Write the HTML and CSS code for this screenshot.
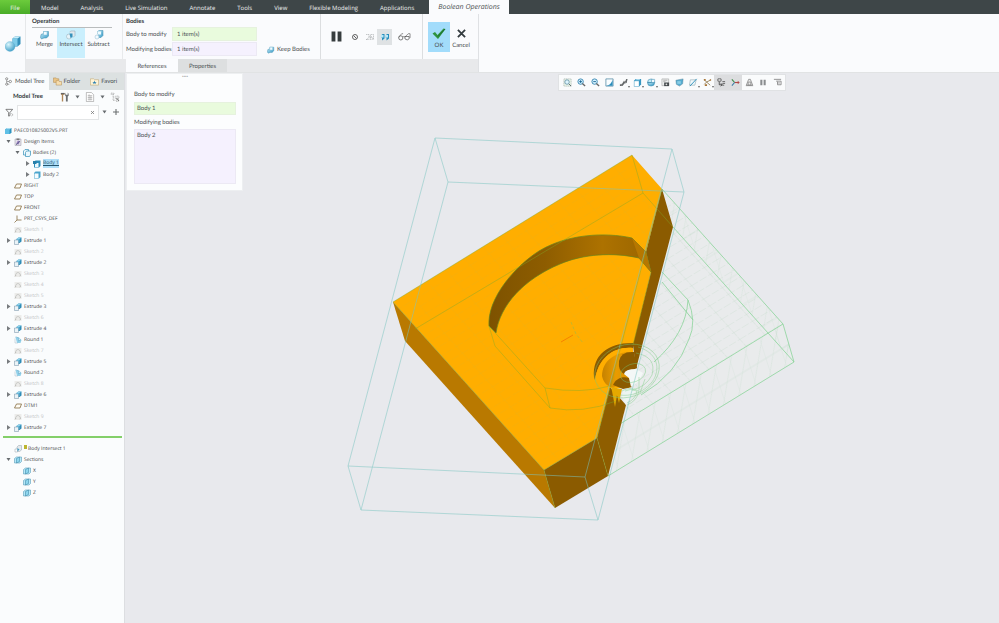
FILE: index.html
```html
<!DOCTYPE html>
<html lang="en">
<head>
<meta charset="utf-8">
<title>Boolean Operations</title>
<link rel="stylesheet" href="styles.css">
</head>
<body>
<svg class="defs" aria-hidden="true">
  <defs>
    <linearGradient id="blue" x1="0" y1="0" x2="1" y2="1"><stop offset="0" stop-color="#c5edfa"/><stop offset="1" stop-color="#3598c5"/></linearGradient>
    <radialGradient id="ball" cx=".35" cy=".3" r=".75"><stop offset="0" stop-color="#d9f6fd"/><stop offset="1" stop-color="#3d9dc6"/></radialGradient>
  </defs>
  <symbol id="cube" viewBox="0 0 16 16"><path d="M2 5l4-3h9v9l-3 3H2z" fill="#2f93c0"/><path d="M2 5l4-3h9l-4 3z" fill="#a7def2"/><path d="M2 5h9v9H2z" fill="#5fc0e6"/></symbol>
  <symbol id="body" viewBox="0 0 16 16"><path d="M2 4l3-3h10v11l-3 3H2z" fill="#4aa5cd"/><path d="M3 5h8v9H3z" fill="#f4fbff"/></symbol>
  <symbol id="bodyon" viewBox="0 0 16 16"><path d="M2 4l3-3h10v11l-3 3H2z" fill="#2b8dbb"/><path d="M4 6h7v8H4z" fill="#eaf8ff"/><path d="M0 2h7v6H0z" fill="#277fa9"/></symbol>
  <symbol id="bodies" viewBox="0 0 16 16"><path d="M1 4l3-3h7v3M1 4v8h4M5 7l2-3h8v8l-2 3H5z" fill="#e9f7fd" stroke="#348fb8" stroke-width="1.4"/></symbol>
  <symbol id="design" viewBox="0 0 16 16"><path d="M2 2h12v13H2z" fill="#e4e2e9" stroke="#9a96a5"/><path d="M5 1h6v3H5z" fill="#777"/><path d="M4 12l4-7 4 2-3 6z" fill="#8f75bb"/><path d="M4 14l8-8" stroke="#5b6a80" stroke-width="1.5"/></symbol>
  <symbol id="plane" viewBox="0 0 16 16"><path d="M5 4h10l-3 8H1z" fill="#fffdf6" stroke="#8b7449" stroke-width="1.7"/></symbol>
  <symbol id="csys" viewBox="0 0 16 16"><path d="M6 1v9h9M6 10l-5 5" fill="none" stroke="#8b7449" stroke-width="1.7"/></symbol>
  <symbol id="sketch" viewBox="0 0 16 16"><path d="M1 2h14v12H1z" fill="#ececea"/><path d="M3 12c0-9 9-9 10-1M2 13l2-3M11 12l3-2" fill="none" stroke="#b9bbb8" stroke-width="1.5"/></symbol>
  <symbol id="extrude" viewBox="0 0 16 16"><path d="M5 4l4-3h6v8l-4 3H5z" fill="#2f8cb6"/><path d="M5 4l4-3h6l-4 3z" fill="#92d3ec"/><path d="M1 6h8v9H1z" fill="#eaf3f7" stroke="#6c8ba0"/><path d="M6 4h5v6H9V6H6z" fill="#68b8d9"/></symbol>
  <symbol id="round" viewBox="0 0 16 16"><path d="M3 2h6l6 6-2 6H6z" fill="#92d1ea"/><path d="M3 2c6 0 7 4 6 8l5-3" fill="#dff4fb" stroke="#5499b8"/><path d="M2 5v9h6" fill="none" stroke="#a5bac5"/></symbol>
  <symbol id="boolean" viewBox="0 0 16 16"><path d="M6 4l3-3h6v9l-4 3H6z" fill="#e4e9ed" stroke="#92a0aa"/><path d="M2 8h5v6H2z" fill="#fff" stroke="#9aa6af"/><path d="M7 6l4 3-4 4z" fill="#419fc7"/></symbol>
  <symbol id="section" viewBox="0 0 16 16"><path d="M1 5l4-3h10v9l-3 3H1z" fill="#b7e8f8" stroke="#448eaf"/><path d="M5 5l6-3v9l-6 3z" fill="#8ed6ee" stroke="#357e9e"/></symbol>
  <symbol id="merge" viewBox="0 0 20 20"><path d="M7 3h10v9l-4 4H8l-5 2-2-3 1-6 5-2z" fill="url(#blue)" stroke="#3b89aa"/><path d="M7 3h7v7H7z" fill="#effaff" stroke="#7bbbd5"/></symbol>
  <symbol id="intersect" viewBox="0 0 20 20"><path d="M7 4l3-2h8v9l-4 4" fill="#dfe9ee" stroke="#8b9fac"/><circle cx="6" cy="13" r="5" fill="#e7f4fa" stroke="#91a8b4"/><path d="M7 7h6v7l-4 2z" fill="#3591bc"/></symbol>
  <symbol id="subtract" viewBox="0 0 20 20"><path d="M7 3l3-2h8v10l-4 4H9V8H7z" fill="url(#blue)" stroke="#3b89aa"/><path d="M7 3h7v6H7z" fill="#eefaff"/><circle cx="6" cy="14" r="4" fill="#f3fafe" stroke="#8ab9ce"/></symbol>
  <symbol id="app" viewBox="0 0 32 32"><path d="M15 5l5-4h11v15l-6 5H15z" fill="#338fb9"/><path d="M15 5l5-4h11l-6 4z" fill="#c8effb"/><path d="M15 5h10v15H15z" fill="#7ecbe8"/><circle cx="10" cy="21" r="10" fill="url(#ball)" stroke="#5aaacd" stroke-width=".5"/></symbol>
  <symbol id="nosign" viewBox="0 0 16 16"><circle cx="8" cy="8" r="5" fill="none" stroke="#555" stroke-width="1.8"/><path d="M5 5l6 6" stroke="#555" stroke-width="1.8"/></symbol>
  <symbol id="ghost" viewBox="0 0 20 16"><path d="M2 3h6v5l-5 5 8-1M11 3h6v9l-6 1V5l7 9M2 13h4M8 8h6" fill="none" stroke="#a9abad" stroke-width="1.3" stroke-dasharray="3 1"/></symbol>
  <symbol id="preview" viewBox="0 0 20 16"><path d="M3 4l2-2h4v9l-5 4V9H2zM12 4l2-2h4v9l-5 4V9h-2z" fill="#268ebd"/><path d="M2 4h5v5H2zM11 4h5v5h-5z" fill="#b9e9fa"/></symbol>
  <symbol id="glasses" viewBox="0 0 28 18"><path d="M1 11l7-8h3M15 10l7-7h4v9M10 10q2-2 5 0" fill="none" stroke="#666" stroke-width="1.5"/><circle cx="6" cy="12" r="4.5" fill="none" stroke="#555" stroke-width="1.6"/><path d="M15 9h9v5q-4 5-9 0z" fill="none" stroke="#555" stroke-width="1.6"/></symbol>
  <symbol id="check" viewBox="0 0 28 24"><path d="M1 12l5-3 5 6L23 2l4 1-15 20z" fill="#2e9440"/><path d="M12 18L26 3" stroke="#196e32" stroke-width="2"/></symbol>
  <symbol id="cross" viewBox="0 0 20 20"><path d="M2 2l16 16M18 2L2 18" stroke="#333b3f" stroke-width="4"/></symbol>
  <symbol id="treeicon" viewBox="0 0 16 20"><path d="M4 6v10h6M4 10h6" fill="none" stroke="#555"/><circle cx="4" cy="4" r="2.4" fill="#fff" stroke="#555" stroke-width="1.3"/><circle cx="4" cy="16" r="2.4" fill="#fff" stroke="#555" stroke-width="1.3"/><circle cx="12" cy="10" r="2.6" fill="#fff" stroke="#555" stroke-width="1.3"/></symbol>
  <symbol id="folder" viewBox="0 0 20 20"><path d="M1 2h6l2 2h4v8H1z" fill="#eac486" stroke="#aa8144"/><path d="M7 8h5l2 2h5v8H7z" fill="#f6ddae" stroke="#aa8144"/></symbol>
  <symbol id="favorite" viewBox="0 0 20 20"><path d="M1 4h7l2 2h9v12H1z" fill="#fff4d7" stroke="#b39558"/><path d="M10 8l1.2 3H15l-3 2 1 3-3-2-3 2 1-3-3-2h4z" fill="#277eb2"/></symbol>
  <symbol id="tools" viewBox="0 0 20 22"><path d="M1 2h8v4H6v15H3V6H1z" fill="#b08859"/><path d="M1 2h8v3H1z" fill="#666"/><path d="M12 1v5h4V1l2 3v4l-2 2v11h-4V10l-2-3z" fill="#6b6f72"/></symbol>
  <symbol id="sheet" viewBox="0 0 20 22"><path d="M2 1h11l5 5v15H2z" fill="#fff" stroke="#777"/><path d="M5 8h10M5 12h10M5 16h10M8 5v14M12 8v11" stroke="#888"/></symbol>
  <symbol id="columns" viewBox="0 0 20 20"><path d="M2 2h6v3H2zM6 5v12h4M6 10h4M11 8h7v5h-7zM12 15h5v4h-5z" fill="#e5e7e8" stroke="#999" stroke-dasharray="2 1"/><path d="M13 12l5 6" stroke="#777" stroke-width="2"/></symbol>
  <symbol id="filter" viewBox="0 0 20 20"><path d="M2 3h15l-6 7v7l-3 1v-8z" fill="none" stroke="#555" stroke-width="1.6"/><path d="M14 12l4 3-4 3" fill="none" stroke="#777"/></symbol>
  <symbol id="clear" viewBox="0 0 10 10"><path d="M2 2l6 6M8 2L2 8" stroke="#777" stroke-width="1.5"/></symbol>
  <symbol id="plus" viewBox="0 0 10 10"><path d="M5 0v10M0 5h10" stroke="#6a6e70" stroke-width="1.8"/></symbol>
  <symbol id="fit" viewBox="0 0 20 20"><path d="M2 2h16v16H2z" fill="#eef8ed" stroke="#788b82" stroke-dasharray="3 1"/><circle cx="9" cy="9" r="5" fill="#ddf4fc" stroke="#4c7e98" stroke-width="1.5"/><path d="M13 13l5 5" stroke="#566" stroke-width="2"/></symbol>
  <symbol id="zoomin" viewBox="0 0 20 20"><circle cx="8" cy="8" r="6" fill="#d6f1fd" stroke="#3485b1" stroke-width="2"/><path d="M5 8h6M8 5v6" stroke="#176594" stroke-width="2"/><path d="M12 12l6 6" stroke="#666" stroke-width="3"/></symbol>
  <symbol id="zoomout" viewBox="0 0 20 20"><circle cx="8" cy="8" r="6" fill="#d6f1fd" stroke="#3485b1" stroke-width="2"/><path d="M5 8h6" stroke="#176594" stroke-width="2"/><path d="M12 12l6 6" stroke="#666" stroke-width="3"/></symbol>
  <symbol id="repaint" viewBox="0 0 20 20"><path d="M2 2h16v16H2z" fill="#f9fdff" stroke="#3e7c9a" stroke-width="1.5"/><path d="M17 4v13H3c8-1 11-5 14-13z" fill="#2b8dbb"/></symbol>
  <symbol id="render" viewBox="0 0 20 20"><path d="M2 14l5-1 4-7 3 1 2-5h3l-2 9-5 1-4 6H2z" fill="#626668"/><path d="M3 13l4 4M11 7l4 3" stroke="#aaa" stroke-width="2"/></symbol>
  <symbol id="views" viewBox="0 0 20 20"><path d="M2 6l4-4h12v12l-4 5H2z" fill="#3897c1"/><path d="M3 7h10v11H3z" fill="#fff"/><path d="M5 5l3-2h8l-2 2z" fill="#c9edfb"/></symbol>
  <symbol id="sphere" viewBox="0 0 20 20"><circle cx="9" cy="10" r="8" fill="url(#ball)" stroke="#3681a6"/><path d="M1 10h16" stroke="#20759f" stroke-width="1.5"/><path d="M10 3h7v7h-7z" fill="#eff9fe" stroke="#398baf"/></symbol>
  <symbol id="camera" viewBox="0 0 20 20"><path d="M2 2h15v15H2z" fill="#eceeee" stroke="#888"/><path d="M5 5h9M5 8h5" stroke="#777"/><path d="M7 10h11v8H7z" fill="#454b4e"/><circle cx="12" cy="14" r="2" fill="#ddd"/></symbol>
  <symbol id="perspective" viewBox="0 0 20 20"><path d="M2 5l16-3-1 11-7 5-7-4z" fill="#55acd0" stroke="#54849a"/><path d="M5 7h8v6H5z" fill="#8acde5"/></symbol>
  <symbol id="datum" viewBox="0 0 20 20"><path d="M3 4h13l-3 12H1z" fill="#eff8fb" stroke="#718f9b"/><path d="M2 18L17 2" stroke="#278bb9" stroke-width="2"/></symbol>
  <symbol id="axes" viewBox="0 0 20 20"><path d="M3 4l5 5 8-4M8 9l8 7M3 14l5-5" fill="none" stroke="#8b7449" stroke-width="1.8"/><path d="M2 2h4v4H2zM15 3h3v3h-3zM4 14h5v4H4z" fill="#a87639"/></symbol>
  <symbol id="notes" viewBox="0 0 20 20"><path d="M2 2h7v5H2zM12 8h6M12 12h6M12 16h4" fill="#fff" stroke="#444" stroke-width="1.7"/><path d="M5 8v7h6M8 12l4 3-4 3" fill="none" stroke="#333" stroke-width="1.7"/></symbol>
  <symbol id="spin" viewBox="0 0 20 20"><path d="M8 10h10" stroke="#b24646" stroke-width="2.5"/><path d="M8 10L2 3" stroke="#398a47" stroke-width="2.5"/><path d="M8 10l-6 7" stroke="#397ba6" stroke-width="2.5"/><path d="M15 6l4 4-4 4z" fill="#b24646"/></symbol>
  <symbol id="simulate" viewBox="0 0 20 20"><path d="M8 3h4l5 13H3zM2 17h16M7 9h6v7H7z" fill="#ececec" stroke="#8a8a8a" stroke-width="1.8"/></symbol>
  <symbol id="pause" viewBox="0 0 20 20"><path d="M1 1h7v18H1zM12 1h7v18h-7z" fill="currentColor"/></symbol>
  <symbol id="list" viewBox="0 0 20 20"><path d="M2 3h16M7 7h11v8h-8V8" fill="none" stroke="#8a8a8a" stroke-width="2"/><path d="M10 11h6" stroke="#999" stroke-width="2"/></symbol>
</svg>

<header>
  <nav class="menubar" aria-label="Ribbon tabs">
    <button class="file">File</button><button>Model</button><button>Analysis</button><button>Live Simulation</button><button>Annotate</button><button>Tools</button><button>View</button><button>Flexible Modeling</button><button>Applications</button><button class="current">Boolean Operations</button>
  </nav>
  <div class="dashboard">
    <div class="brand"><svg><use href="#app"/></svg></div>
    <div class="ribbon">
      <div class="commands">
        <section class="operation">
          <h2>Operation</h2>
          <div class="choices">
            <button><svg><use href="#merge"/></svg>Merge</button>
            <button class="chosen"><svg><use href="#intersect"/></svg>Intersect</button>
            <button><svg><use href="#subtract"/></svg>Subtract</button>
          </div>
        </section>
        <section class="collect">
          <h2>Bodies</h2>
          <div class="fields">
            <label for="modify">Body to modify</label><input class="green" id="modify" value="1 item(s)" readonly>
            <label for="modifying">Modifying bodies</label><input class="violet" id="modifying" value="1 item(s)" readonly>
          </div>
        </section>
        <button class="keep"><svg><use href="#merge"/></svg>Keep Bodies</button>
        <div class="playback">
          <button class="pause" aria-label="Pause"><svg><use href="#pause"/></svg></button>
          <button aria-label="No preview"><svg><use href="#nosign"/></svg></button>
          <button aria-label="Unattached preview"><svg><use href="#ghost"/></svg></button>
          <button class="pressed" aria-label="Attached preview"><svg><use href="#preview"/></svg></button>
          <button class="verify" aria-label="Verify"><svg><use href="#glasses"/></svg></button>
        </div>
        <div class="confirm">
          <button class="ok"><svg><use href="#check"/></svg>OK</button>
          <button class="cancel"><svg><use href="#cross"/></svg>Cancel</button>
        </div>
      </div>
      <div class="slides"><button class="open">References</button><button>Properties</button></div>
    </div>
  </div>
</header>

<div class="workspace">
  <aside>
    <div class="sidetabs">
      <button class="on"><svg><use href="#treeicon"/></svg>Model Tree</button>
      <button><svg><use href="#folder"/></svg>Folder</button>
      <button><svg><use href="#favorite"/></svg>Favori</button>
    </div>
    <div class="treehead">
      <h2>Model Tree</h2>
      <button aria-label="Settings"><svg><use href="#tools"/></svg><i class="down"></i></button>
      <button aria-label="Display"><svg><use href="#sheet"/></svg><i class="down"></i></button>
      <button aria-label="Columns"><svg><use href="#columns"/></svg></button>
    </div>
    <div class="search">
      <svg><use href="#filter"/></svg>
      <div class="searchbox"><input aria-label="Filter tree"><button aria-label="Clear"><svg><use href="#clear"/></svg></button></div>
      <button aria-label="Filter options"><i class="down"></i></button>
      <button class="plus" aria-label="Add"><svg><use href="#plus"/></svg></button>
    </div>
    <ul class="tree">
      <li class="root"><svg><use href="#cube"/></svg>PAEC010825002V5.PRT</li>
      <li><i class="down"></i><svg><use href="#design"/></svg>Design Items</li>
      <li class="l2"><i class="down"></i><svg><use href="#bodies"/></svg>Bodies (2)</li>
      <li class="l3"><i class="right"></i><svg><use href="#bodyon"/></svg><a href="#scene">Body 1</a></li>
      <li class="l3"><i class="right"></i><svg><use href="#body"/></svg>Body 2</li>
      <li><i></i><svg><use href="#plane"/></svg>RIGHT</li>
      <li><i></i><svg><use href="#plane"/></svg>TOP</li>
      <li><i></i><svg><use href="#plane"/></svg>FRONT</li>
      <li><i></i><svg><use href="#csys"/></svg>PRT_CSYS_DEF</li>
      <li class="dim"><i></i><svg><use href="#sketch"/></svg>Sketch 1</li>
      <li><i class="right"></i><svg><use href="#extrude"/></svg>Extrude 1</li>
      <li class="dim"><i></i><svg><use href="#sketch"/></svg>Sketch 2</li>
      <li><i class="right"></i><svg><use href="#extrude"/></svg>Extrude 2</li>
      <li class="dim"><i></i><svg><use href="#sketch"/></svg>Sketch 3</li>
      <li class="dim"><i></i><svg><use href="#sketch"/></svg>Sketch 4</li>
      <li class="dim"><i></i><svg><use href="#sketch"/></svg>Sketch 5</li>
      <li><i class="right"></i><svg><use href="#extrude"/></svg>Extrude 3</li>
      <li class="dim"><i></i><svg><use href="#sketch"/></svg>Sketch 6</li>
      <li><i class="right"></i><svg><use href="#extrude"/></svg>Extrude 4</li>
      <li><i></i><svg><use href="#round"/></svg>Round 1</li>
      <li class="dim"><i></i><svg><use href="#sketch"/></svg>Sketch 7</li>
      <li><i class="right"></i><svg><use href="#extrude"/></svg>Extrude 5</li>
      <li><i></i><svg><use href="#round"/></svg>Round 2</li>
      <li class="dim"><i></i><svg><use href="#sketch"/></svg>Sketch 8</li>
      <li><i class="right"></i><svg><use href="#extrude"/></svg>Extrude 6</li>
      <li><i></i><svg><use href="#plane"/></svg>DTM1</li>
      <li class="dim"><i></i><svg><use href="#sketch"/></svg>Sketch 9</li>
      <li><i class="right"></i><svg><use href="#extrude"/></svg>Extrude 7</li>
    </ul>
    <hr>
    <ul class="tree">
      <li><i></i><svg><use href="#boolean"/></svg><b class="flag"></b>Body Intersect 1</li>
      <li><i class="down"></i><svg><use href="#section"/></svg>Sections</li>
      <li class="l2"><i></i><svg><use href="#section"/></svg>X</li>
      <li class="l2"><i></i><svg><use href="#section"/></svg>Y</li>
      <li class="l2"><i></i><svg><use href="#section"/></svg>Z</li>
    </ul>
  </aside>

  <main>
    <svg id="scene" class="scene" viewBox="125 73 874 550" preserveAspectRatio="xMinYMin meet" role="img" aria-label="Model">
      <defs>
        <pattern id="mesh" width="22" height="9" patternUnits="userSpaceOnUse" patternTransform="matrix(.85 -.52 .67 .745 662 189)"><path d="M0 0h22" stroke="#7fb98b" stroke-width=".5" stroke-dasharray="8 2"/><path d="M0 0v9" stroke="#7fb98b" stroke-width=".5" stroke-dasharray="5 1"/></pattern>
        <pattern id="rim" width="18" height="30" patternUnits="userSpaceOnUse" patternTransform="matrix(.85 -.52 .3 .95 608 438)"><path d="M0 0v30M0 30L18 0M0 15h18" fill="none" stroke="#86c496" stroke-width=".5"/></pattern>
        <linearGradient id="wall"><stop offset="0" stop-color="#7d5200"/><stop offset=".35" stop-color="#8e5d00"/><stop offset=".7" stop-color="#ad7200"/><stop offset="1" stop-color="#9a6500"/></linearGradient>
        <linearGradient id="bowl"><stop offset="0" stop-color="#c58200"/><stop offset=".5" stop-color="#e99b00"/><stop offset="1" stop-color="#dd9300"/></linearGradient>
      </defs>
      <path d="M662 189L783 324 794 362 608 476 673 227z" fill="#eaeeec" opacity=".5"/>
      <path d="M662 189L783 324 620 422 673 227z" fill="url(#mesh)" opacity=".4"/>
      <path d="M783 324L794 362 608 476 622 421z" fill="url(#rim)" opacity=".28"/>
      <path d="M662 189L783 324 794 362 673 227z" fill="url(#rim)" opacity=".25"/>
      <g fill="none" stroke="#8bd49b" stroke-width=".8">
        <path d="M662 189L783 324 794 362 608 476M673 227L794 362M783 324L597 438M662 272l26 28q-2 34-34 62M662 282l31 38M688 300q9 22 1 39-12 35-48 56"/>
      </g>
      <path d="M393 302L632 155 662 189 646 252 651 272 634 345 610 388 597 438 544 470z" fill="#ffae00"/>
      <path d="M393 302L632 155 662 189 646 252 651 272 634 345 610 388 597 438 544 470z" fill="url(#mesh)" opacity=".18"/>
      <path d="M393 302L544 470 555 508 405 341z" fill="#b97900"/>
      <path d="M662 189L673 227 636 369 633 345 651 272 646 252z" fill="#8b5b00"/>
      <path d="M544 470L597 438 608 476 555 508z" fill="#8b5b00"/>
      <path d="M597 438L610 387 626 405 608 476z" fill="#8f5e00"/>
      <path d="M489 326C487 299 514 267 539 251 567 234 605 232 632 238L646 252 651 272 639 258C613 252 583 254 560 264 524 279 500 305 496 333z" fill="url(#wall)" stroke="#64851c" stroke-width=".7"/>
      <path d="M632 238L646 252 651 272 639 258z" fill="#b67700"/>
      <path d="M594 377C592 354 610 342 634 343L633 348C614 346 598 358 595 380z" fill="#8b5b00"/>
      <path d="M595 380C598 358 614 346 633 348L634 369 629 388 610 388C603 387 598 384 595 380z" fill="#ffae00"/>
      <path d="M602 376C602 361 615 352 630 352L628 380 613 388C606 386 603 381 602 376z" fill="url(#bowl)"/>
      <path d="M634 352Q621 351 619 361 618 371 624 374L637 368z" fill="#8b5b00"/>
      <path d="M613 385C616 378 623 376 629 378L632 387 623 389z" fill="#8b5b00"/>
      <path d="M624 374Q625 369 636 369L643 373 639 381 631 387 629 378z" fill="#f4f8f7"/>
      <path d="M623 390l9-2 6 1-9 10-3 6-4-8z" fill="#edf4f1"/>
      <path d="M611 387l11 2-3 14-2-8-2 12-3-16z" fill="#e6a900"/>
      <g fill="none" stroke="#75cb7c" stroke-width=".5" opacity=".8">
        <ellipse cx="627" cy="371" rx="33" ry="26" transform="rotate(-20 627 371)"/>
        <path d="M638 347c14 4 23 15 17 30-6 13-22 20-35 18M636 353q21 4 16 22-6 12-20 15"/>
        <ellipse cx="633" cy="373" rx="13" ry="9" transform="rotate(-20 633 373)"/>
        <path d="M622 391q8-5 17 0-2 10-12 14M625 391q5-3 12 0-1 8-10 12M639 377v13M645 379l-5 14"/>
      </g>
      <g fill="none" stroke="#80ac28" stroke-width=".6" opacity=".7">
        <path d="M393 302L632 155l11 38-228 136M643 193l30 34M662 189l-65 249M393 302L544 470l11 38M544 470l53-32M489 326l56 62q37 6 65-2M489 326l6 20 55 62q33 6 66-7M545 388l5 20M651 272l-18 73M597 438l11 38"/>
      </g>
      <path d="M561 342l12-7" stroke="#f07000" stroke-width=".7"/><path d="M571 322l5 12 7 9" fill="none" stroke="#9dbb46" stroke-width=".6" stroke-dasharray="3 2"/>
      <g fill="none" stroke="#7cc6c1" stroke-width=".7" opacity=".75">
        <path d="M435 138L672 149 684 192 448 182z"/>
        <path d="M348 466L585 477 598 520 361 510z"/>
        <path d="M435 138l-87 328M672 149l-87 328M684 192l-86 328M448 182l-87 328"/>
      </g>
    </svg>

    <div class="panel">
      <div class="grip">····</div>
      <label for="body1">Body to modify</label>
      <input class="green" id="body1" value="Body 1" readonly>
      <label for="body2">Modifying bodies</label>
      <textarea class="violet" id="body2" readonly>Body 2</textarea>
    </div>

    <div class="viewbar" role="toolbar" aria-label="Graphics toolbar">
      <button aria-label="Refit"><svg><use href="#fit"/></svg></button>
      <button aria-label="Zoom in"><svg><use href="#zoomin"/></svg></button>
      <button aria-label="Zoom out"><svg><use href="#zoomout"/></svg></button>
      <button aria-label="Repaint"><svg><use href="#repaint"/></svg></button>
      <button class="more" aria-label="Rendering"><svg><use href="#render"/></svg></button>
      <button class="more" aria-label="Display style"><svg><use href="#views"/></svg></button>
      <button class="more" aria-label="Saved orientations"><svg><use href="#sphere"/></svg></button>
      <button aria-label="View manager"><svg><use href="#camera"/></svg></button>
      <button aria-label="Perspective"><svg><use href="#perspective"/></svg></button>
      <button class="more" aria-label="Sections"><svg><use href="#datum"/></svg></button>
      <button class="more" aria-label="Datum display"><svg><use href="#axes"/></svg></button>
      <button class="active" aria-label="Annotations"><svg><use href="#notes"/></svg></button>
      <button class="active" aria-label="Spin center"><svg><use href="#spin"/></svg></button>
      <button aria-label="Simulate"><svg><use href="#simulate"/></svg></button>
      <button class="grey" aria-label="Pause simulation"><svg><use href="#pause"/></svg></button>
      <button aria-label="Simulation options"><svg><use href="#list"/></svg></button>
    </div>
  </main>
</div>
</body>
</html>
```
FILE: styles.css
```css
* { box-sizing: border-box; }
body {
  margin: 0;
  min-height: 100vh;
  display: flex;
  flex-direction: column;
  background: #e8e9ed;
  color: #4b5052;
  font: 6px/8px Lato, "Open Sans", sans-serif;
  text-rendering: geometricPrecision;
}
button, input, textarea {
  font: inherit;
  color: inherit;
  text-rendering: inherit;
  border: 0;
  padding: 0;
  margin: 0;
  background: none;
  border-radius: 0;
  outline: 0;
}
button { display: flex; align-items: center; justify-content: center; white-space: nowrap; }
svg { display: block; flex: none; width: 8px; height: 8px; }
h2 { margin: 0; font-size: 6px; line-height: 8px; font-weight: 700; color: #33393c; }
.defs { position: absolute; width: 0; height: 0; }
.green { background: #e9fbdd; border: 1px solid #e6f2de; }
.violet { background: #f5f1fe; border: 1px solid #ece9f4; }

.menubar { display: flex; height: 14px; background: #3e4648; font-family: "Open Sans", sans-serif; }
.menubar button { color: #eef0f0; padding: 1px 11px 0; }
.menubar .file { width: 30px; padding: 1px 0 0; background: linear-gradient(#6ccb3c, #49ac28); }
.menubar .current { margin-left: 4px; padding: 2px 9px 0; font-size: 7px; font-style: italic; color: #4b5052; background: #fafbfd; }

.dashboard { display: flex; height: 59px; background: #fafbfd; border-bottom: 1px solid #e1e3e4; }
.brand { width: 26px; padding: 22px 5px; border-right: 1px solid #e6e8ea; }
.brand svg { width: 16px; height: 16px; }
.ribbon { border-right: 1px solid #dfe1e4; display: flex; flex-direction: column; }
.commands { display: flex; height: 45px; }
.commands section { padding-top: 3px; }
.operation { width: 97px; padding-left: 6px; border-right: 1px solid #e8eaec; }
.operation h2 { line-height: 10px; }
.choices { display: grid; grid-template-columns: 25px 28px 27px; width: 80px; border-top: 1px solid #b9bcbd; }
.choices button { height: 30px; flex-direction: column; justify-content: flex-start; padding-top: 2px; gap: 1px; }
.choices svg { width: 10px; height: 10px; }
.choices .chosen { background: #caeffd; }
.collect { padding-left: 3px; }
.collect h2 { line-height: 10px; }
.fields { display: grid; grid-template-columns: 46px 85px; grid-template-rows: 14px 14px; row-gap: 1px; align-items: center; white-space: nowrap; }
.fields input { width: 85px; height: 14px; padding: 1px 0 0 4px; }
.fields label { padding-top: 1px; }
.keep { width: 63px; height: 12px; align-self: flex-end; margin-bottom: 3px; gap: 2px; }
.playback { display: flex; align-items: center; width: 103px; padding-left: 10px; border-left: 1px solid #dcdee0; border-right: 1px solid #dcdee0; }
.playback button { width: 15px; height: 16px; }
.playback .pause { width: 11px; margin-right: 5px; color: #363c3e; }
.pause svg { width: 11px; height: 11px; }
.playback .pressed { background: #dfe2e4; }
.playback .pressed svg, .playback button:nth-child(3) svg { width: 10px; }
.playback .verify { width: 24px; }
.verify svg { width: 13px; height: 9px; }
.confirm { display: flex; padding: 8px 6px 0 5px; }
.confirm button { height: 30px; width: 22px; flex-direction: column; gap: 2px; padding-top: 2px; }
.confirm svg { width: 14px; height: 13px; }
.confirm .ok { background: #a2dcfb; }
.confirm .cancel svg { width: 9px; height: 13px; }
.slides { flex: 1; display: flex; padding-left: 100px; background: #e8e9eb; }
.slides button { width: 49px; padding-top: 2px; background: #dddfe0; }
.slides .open { width: 52px; background: #fbfcfe; }

.workspace { flex: 1; display: flex; }
aside { width: 125px; flex: none; background: #fafcfd; border-right: 1px solid #dcdee1; }
.sidetabs { display: flex; height: 17px; background: #dce1e1; }
.sidetabs button { gap: 2px; padding-left: 4px; justify-content: flex-start; width: 38px; }
.sidetabs .on { width: 49px; background: #fafcfd; }
.sidetabs svg { width: 9px; height: 9px; }
.treehead { display: flex; align-items: center; height: 14px; padding-left: 13px; gap: 5px; }
.treehead h2 { width: 42px; }
.treehead button { gap: 5px; }
.treehead svg { width: 10px; height: 10px; }
.search { display: flex; height: 16px; align-items: center; padding-left: 5px; gap: 3px; }
.search > svg { width: 9px; height: 9px; }
.searchbox { display: flex; width: 82px; height: 15px; background: #fff; border: 1px solid #e3e5e6; }
.searchbox input { width: 72px; }
.searchbox svg { width: 5px; height: 5px; }
.search .plus { width: 12px; }
.plus svg { width: 6px; height: 6px; }
i { display: block; flex: none; width: 5px; height: 4px; }
.down { background: #666b6e; clip-path: polygon(10% 10%, 90% 10%, 50% 90%); }
i.right { height: 5px; background: #777b7e; clip-path: polygon(20% 0, 90% 50%, 20% 100%); }
.tree { list-style: none; margin: 0; padding: 5px 0 0; font-family: "Open Sans", sans-serif; font-size: 5px; color: #3f4446; }
.tree li { display: flex; align-items: center; height: 11px; padding-left: 6px; white-space: nowrap; }
.tree svg { margin: 0 2px 0 3px; }
.tree .root { padding-left: 1px; }
.tree .l2 { padding-left: 15px; }
.tree .l3 { padding-left: 25px; }
.tree .dim { color: #bfc3c5; }
.tree a { color: #24556d; background: #aedef8; text-decoration: underline; line-height: 9px; }
.flag { width: 3px; height: 4px; margin-right: 1px; align-self: flex-start; margin-top: 2px; background: #bcb52e; }
hr { height: 2px; margin: 3px 2px 0 3px; border: 0; background: #83cf69; }

main { flex: 1; min-width: 0; position: relative; }
.scene { width: 100%; height: auto; }
.panel { position: absolute; left: 1px; top: 0; width: 117px; height: 118px; padding: 0 6px 6px 7px; display: flex; flex-direction: column; background: #fcfdfe; border: 1px solid #edeff1; }
.grip { text-align: center; line-height: 6px; height: 15px; color: #777; }
.panel label { line-height: 11px; }
.panel input { height: 13px; padding: 0 2px; width: 102px; margin: 2px 0; }
.panel textarea { flex: 1; resize: none; width: 102px; padding: 2px; margin-top: 1px; }
.viewbar { position: absolute; left: 433px; top: 1px; display: flex; height: 17px; padding: 0 1px; background: #fafbfc; border: 1px solid #e0e2e4; }
.viewbar button { width: 14px; position: relative; }
.viewbar svg { width: 9px; height: 9px; }
.viewbar .active { background: #dcdddf; }
.viewbar .grey { color: #8a8d8f; }
.viewbar .grey svg { width: 6px; height: 7px; }
.more::after { content: ""; position: absolute; right: 0; bottom: 2px; width: 2px; height: 2px; background: #666; clip-path: polygon(0 0, 100% 0, 50% 100%); }
```
